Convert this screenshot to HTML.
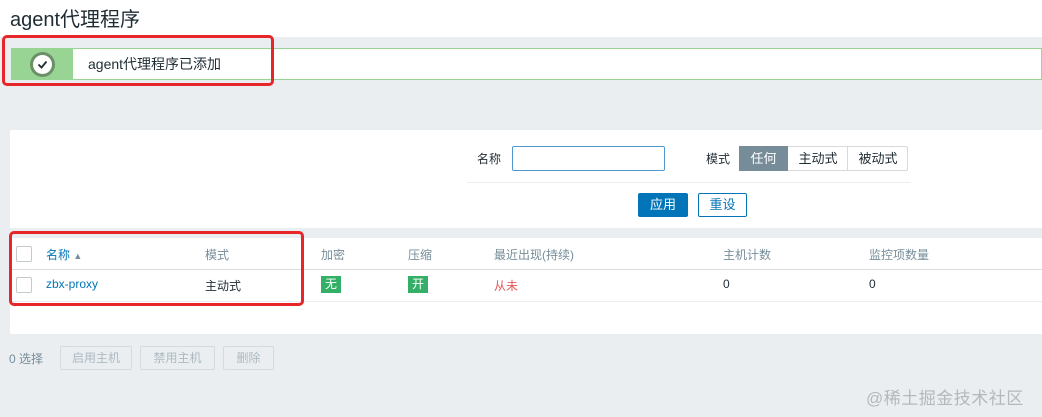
<!DOCTYPE html>
<html><head><meta charset="utf-8"><style>
*{box-sizing:border-box;margin:0;padding:0}
body{width:1042px;height:417px;overflow:hidden;background:#ebeef0;font-family:"Liberation Sans","Noto Sans CJK SC",sans-serif;position:relative;color:#1f2c33;font-size:12px}
.a{position:absolute}
.red{position:absolute;border:3px solid #e8262a;border-radius:5px}
.cb{position:absolute;width:16px;height:16px;border:1px solid #c4c9cc;border-radius:2px;background:#fff}
.hd{position:absolute;top:246px;color:#768d99}
.btn{position:absolute;top:346px;height:24px;border:1px solid #d6dadc;border-radius:2px;color:#acbbc2;background:#ebeef0;text-align:center;line-height:22px}
</style></head><body>
<div class="a" style="left:0;top:0;width:1042px;height:37px;background:#fff"></div>
<div class="a" style="left:10px;top:3px;font-size:20px;color:#1f2c33">agent代理程序</div>
<div class="a" style="left:11px;top:48px;width:1031px;height:32px;background:#fff;border:1px solid #98d595"></div>
<div class="a" style="left:12px;top:49px;width:61px;height:30px;background:#98d595"></div>
<div class="a" style="left:30px;top:52px;width:25px;height:25px;border-radius:50%;background:#6b8f67"></div>
<div class="a" style="left:33px;top:55px;width:19px;height:19px;border-radius:50%;background:#fff"></div>
<svg class="a" style="left:33px;top:55px" width="19" height="19"><path d="M5.5 9.5 L8.5 12.5 L13.5 6.5" stroke="#1f2c33" stroke-width="1.8" fill="none"/></svg>
<div class="a" style="left:88px;top:54px;font-size:14px;color:#1f2c33">agent代理程序已添加</div>
<div class="red" style="left:2px;top:35px;width:272px;height:51px"></div>

<div class="a" style="left:10px;top:130px;width:1032px;height:98px;background:#fff"></div>
<div class="a" style="left:477px;top:150px;color:#1f2c33">名称</div>
<div class="a" style="left:512px;top:146px;width:153px;height:25px;border:1px solid #4f97cc;border-radius:2px"></div>
<div class="a" style="left:706px;top:150px">模式</div>
<div class="a" style="left:739px;top:146px;width:169px;height:25px;border:1px solid #d6dadc;border-radius:2px"></div>
<div class="a" style="left:739px;top:146px;width:49px;height:25px;background:#768d99;color:#fff;text-align:center;line-height:25px;font-size:13px">任何</div>
<div class="a" style="left:788px;top:147px;width:60px;height:23px;line-height:23px;text-align:center;font-size:13px">主动式</div>
<div class="a" style="left:847px;top:147px;width:1px;height:23px;background:#d6dadc"></div>
<div class="a" style="left:848px;top:147px;width:60px;height:23px;line-height:23px;text-align:center;font-size:13px">被动式</div>
<div class="a" style="left:467px;top:182px;width:444px;height:1px;background:#ebeef0"></div>
<div class="a" style="left:638px;top:193px;width:50px;height:24px;background:#0275b8;color:#fff;border-radius:2px;text-align:center;line-height:24px;font-size:13px">应用</div>
<div class="a" style="left:698px;top:193px;width:49px;height:24px;border:1px solid #0275b8;color:#0275b8;border-radius:2px;text-align:center;line-height:22px;font-size:13px">重设</div>

<div class="a" style="left:10px;top:238px;width:1032px;height:96px;background:#fff"></div>
<div class="a" style="left:10px;top:269px;width:1032px;height:1px;background:#d8dde0"></div>
<div class="a" style="left:10px;top:301px;width:1032px;height:1px;background:#ebeef0"></div>
<div class="cb" style="left:16px;top:246px"></div>
<div class="cb" style="left:16px;top:277px"></div>
<div class="hd" style="left:46px;color:#0275b8">名称 <span style="font-size:9px;color:#768d99">▲</span></div>
<div class="hd" style="left:205px">模式</div>
<div class="hd" style="left:321px">加密</div>
<div class="hd" style="left:408px">压缩</div>
<div class="hd" style="left:494px">最近出现(持续)</div>
<div class="hd" style="left:723px">主机计数</div>
<div class="hd" style="left:869px">监控项数量</div>
<div class="a" style="left:46px;top:277px;color:#0275b8">zbx-proxy</div>
<div class="a" style="left:205px;top:277px">主动式</div>
<div class="a" style="left:321px;top:276px;width:20px;height:17px;background:#34af67;color:#fff;text-align:center;line-height:17px">无</div>
<div class="a" style="left:408px;top:276px;width:20px;height:17px;background:#34af67;color:#fff;text-align:center;line-height:17px">开</div>
<div class="a" style="left:494px;top:277px;color:#e45959">从未</div>
<div class="a" style="left:723px;top:277px">0</div>
<div class="a" style="left:869px;top:277px">0</div>
<div class="red" style="left:9px;top:231px;width:295px;height:75px"></div>

<div class="a" style="left:9px;top:350px;color:#768d99">0 选择</div>
<div class="btn" style="left:60px;width:72px">启用主机</div>
<div class="btn" style="left:140px;width:75px">禁用主机</div>
<div class="btn" style="left:223px;width:51px">删除</div>
<div class="a" style="left:866px;top:384px;font-size:17px;color:#b5b8bb;letter-spacing:0.5px">@稀土掘金技术社区</div>
</body></html>
